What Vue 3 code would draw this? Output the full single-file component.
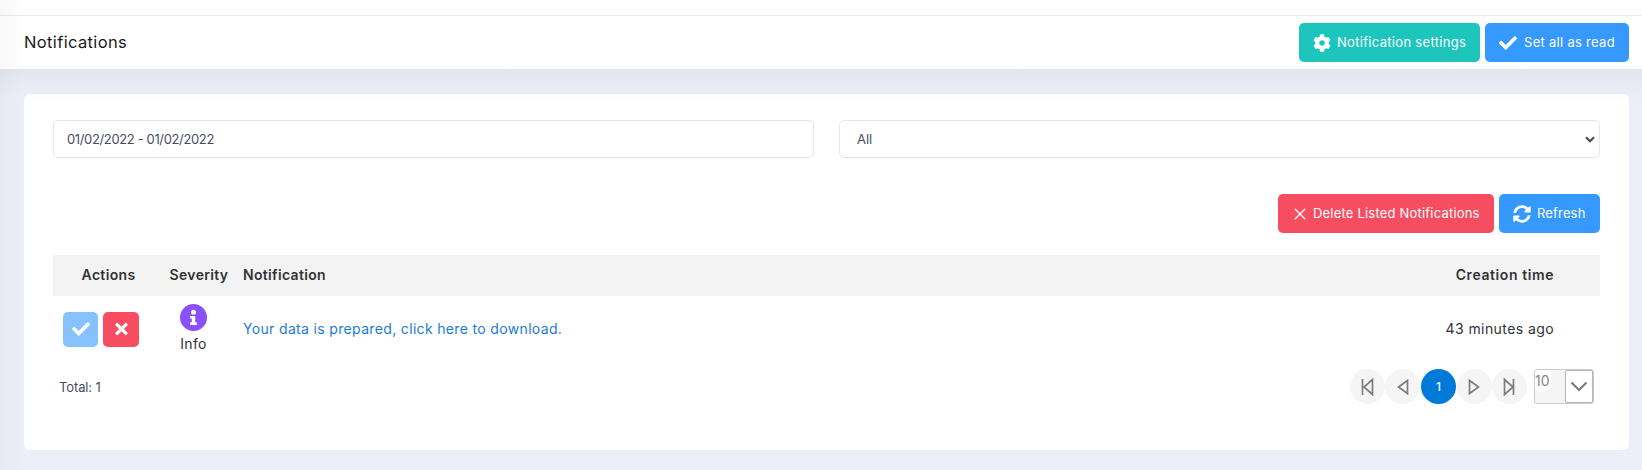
<script setup>
import { ref } from 'vue'
const range = ref('01/02/2022 - 01/02/2022')
const state = ref('All')
const check = 'M173.9 439.4 7.5 273c-10-10-10-26.200 0-36.200l36.200-36.200c10-10 26.200-10 36.200 0L192 312.700 432.100 72.600c10-10 26.200-10 36.200 0l36.200 36.200c10 10 10 26.200 0 36.200L210.100 439.400c-10 10-26.200 10-36.200 0z'
const gear = 'M487.400 315.700l-42.600-24.600c4.300-23.200 4.300-47 0-70.200l42.600-24.600c4.900-2.800 7.100-8.600 5.500-14-11.100-35.600-30-67.800-54.700-94.600-3.800-4.100-10-5.100-14.800-2.300L380.800 110c-17.900-15.400-38.500-27.300-60.800-35.100V25.800c0-5.600-3.900-10.500-9.400-11.700-36.700-8.200-74.300-7.800-109.200 0-5.500 1.200-9.400 6.100-9.400 11.700V75c-22.200 7.900-42.800 19.800-60.800 35.100L88.700 85.500c-4.900-2.800-11-1.900-14.800 2.300-24.700 26.700-43.600 58.900-54.700 94.600-1.700 5.400.6 11.200 5.500 14L67.300 221c-4.300 23.200-4.300 47 0 70.200l-42.600 24.600c-4.900 2.800-7.100 8.600-5.500 14 11.100 35.600 30 67.800 54.700 94.600 3.800 4.100 10 5.100 14.800 2.300l42.600-24.600c17.900 15.400 38.500 27.300 60.800 35.100v49.200c0 5.600 3.900 10.500 9.400 11.700 36.700 8.200 74.300 7.800 109.200 0 5.500-1.200 9.400-6.100 9.400-11.700v-49.200c22.200-7.900 42.800-19.800 60.800-35.100l42.600 24.600c4.900 2.800 11 1.900 14.800-2.300 24.700-26.700 43.600-58.900 54.700-94.600 1.500-5.500-.7-11.300-5.600-14.100zM256 336c-44.100 0-80-35.900-80-80s35.900-80 80-80 80 35.900 80 80-35.900 80-80 80z'
const pages = [
  { name: 'First', d: 'M12.500 10v16M22.500 10.500v15L14 18z' },
  { name: 'Previous', d: 'M22.500 11.500v13L13.500 18z' },
  { name: '1' },
  { name: 'Next', d: 'M12.500 11.500v13L21.500 18z' },
  { name: 'Last', d: 'M21.500 10v16M12.500 10.500v15L21 18z' },
]
</script>

<template>
  <div class="page">
    <div class="topbar"></div>
    <header class="subheader">
      <h1><span class="t-title">Notifications</span></h1>
      <div class="actions">
        <button class="btn teal settings">
          <svg viewBox="0 0 512 512" width="18" height="18"><path :d="gear" /></svg>
          <span class="t-settings">Notification settings</span>
        </button>
        <button class="btn blue read">
          <svg viewBox="0 0 512 512" width="18" height="18"><path :d="check" /></svg>
          <span class="t-read">Set all as read</span>
        </button>
      </div>
    </header>
    <main>
      <section class="card">
        <div class="filters">
          <div class="control"><span class="t-date">{{ range }}</span></div>
          <div class="control select"><span class="t-all">{{ state }}</span>
            <svg width="10" height="7" viewBox="0 0 10 7"><path d="M1 1.200l4 4 4-4" /></svg>
          </div>
        </div>
        <div class="actions tools">
          <button class="btn red delete">
            <svg class="line" viewBox="0 0 12 12" width="12" height="12"><path d="M.8.800l10.400 10.400M11.200.8.800 11.200" /></svg>
            <span class="t-delete">Delete Listed Notifications</span>
          </button>
          <button class="btn blue refresh">
            <svg viewBox="0 0 512 512" width="18" height="18"><path d="M370.700 133.300C339.500 104 298.900 88 255.800 88c-77.500.1-144.300 53.200-162.800 126.900-1.300 5.400-6.100 9.100-11.700 9.100H24.100c-7.500 0-13.200-6.800-11.800-14.200C33.900 94.900 134.800 8 256 8c66.400 0 126.800 26.100 171.300 68.700L463 41c15.100-15.100 41-4.400 41 17v134c0 13.300-10.700 24-24 24H346c-21.400 0-32.100-25.900-17-41zM32 296h134c21.400 0 32.100 25.900 17 41l-41.700 41.700c31.200 29.300 71.800 45.300 114.900 45.300 77.400-.1 144.300-53.100 162.800-126.800 1.300-5.400 6.100-9.200 11.700-9.200h57.300c7.500 0 13.200 6.800 11.800 14.200C478.100 417.100 377.200 504 256 504c-66.400 0-126.800-26.100-171.300-68.700L49 471c-15.100 15.100-41 4.400-41-17V320c0-13.300 10.700-24 24-24z" /></svg>
            <span class="t-refresh">Refresh</span>
          </button>
        </div>
        <div class="row head">
          <div class="c"><span class="t-head">Actions</span></div>
          <div class="c level"><span class="t-head">Severity</span></div>
          <div><span class="t-head">Notification</span></div>
          <div class="r"><span class="t-creation">Creation time</span></div>
        </div>
        <div class="row body">
          <div class="icons">
            <button class="sq light"><svg viewBox="0 0 512 512" width="18" height="18"><path :d="check" /></svg></button>
            <button class="sq red"><svg viewBox="0 0 352 512" width="13" height="18"><path d="M242.700 256l100.100-100.100c12.300-12.300 12.300-32.200 0-44.500l-22.200-22.200c-12.300-12.300-32.200-12.300-44.500 0L176 189.300 75.900 89.200c-12.300-12.300-32.200-12.300-44.500 0L9.200 111.500c-12.300 12.300-12.300 32.200 0 44.500L109.300 256 9.200 356.100c-12.300 12.300-12.300 32.200 0 44.500l22.200 22.200c12.300 12.300 32.200 12.300 44.500 0L176 322.700l100.100 100.100c12.300 12.300 32.200 12.300 44.500 0l22.200-22.200c12.300-12.300 12.300-32.200 0-44.500z" /></svg></button>
          </div>
          <div class="severity">
            <svg width="27" height="27" viewBox="0 0 27 27"><circle cx="13.500" cy="13.500" r="13.500" fill="#8950fc" /><circle cx="13.500" cy="8.300" r="2.500" fill="#fff" /><path d="M10.200 12h5v6.300h1.600V21h-6.600v-2.700h1.600v-3.700h-1.600z" fill="#fff" /></svg>
            <span class="t-info">Info</span>
          </div>
          <div><a class="t-link">Your data is prepared, click here to download.</a></div>
          <div class="r"><span class="t-ago">43 minutes ago</span></div>
        </div>
        <div class="footer">
          <span class="t-total">Total: 1</span>
          <div class="pager">
            <button v-for="p in pages" :key="p.name" :class="{ active: !p.d }">
              <svg v-if="p.d" width="35" height="35" viewBox="0 0 35 35"><path :d="p.d" /></svg>
              <span v-else>1</span>
            </button>
            <div class="size"><span>10</span><i><svg width="18" height="12" viewBox="0 0 18 12"><path d="M1.500 1.500 9 9l7.500-7.500" /></svg></i></div>
          </div>
        </div>
      </section>
      <div class="fade"></div>
    </main>
    <div class="side"></div>
  </div>
</template>

<style>
body { overflow: hidden; }
</style>
<style scoped>
* { box-sizing: border-box; }
.page { position: relative; height: 470px; overflow: hidden; background: #eceff7; font-family: Inter, Lato, sans-serif; font-size: 13px; color: #303238; }
span, a { display: inline-block; white-space: nowrap; }
.topbar { height: 16px; background: #fff; border-bottom: 1px solid #ebebec; }
.subheader { height: 53px; background: #fff; padding: 0 13px 0 24px; display: flex; justify-content: space-between; align-items: center; }
h1 { margin: 0 0 2px; font-size: 16.500px; font-weight: 400; color: #1b1b1d; line-height: 20px; }
.t-title { letter-spacing: .36px; }
.t-settings { letter-spacing: .31px; }
.t-read { letter-spacing: .29px; }
.t-date { letter-spacing: -.36px; }
.t-delete { letter-spacing: .2px; }
.t-refresh { letter-spacing: .16px; }
.t-head { letter-spacing: .33px; }
.t-creation { letter-spacing: .58px; }
.t-link { letter-spacing: .34px; }
.t-ago { letter-spacing: .42px; }
.t-info { letter-spacing: .3px; }
.t-total { letter-spacing: -.12px; }
.actions { display: flex; gap: 5px; }
.btn { height: 39px; border: 0; border-radius: 5px; padding: 0 0 0 14px; display: flex; align-items: center; font: 400 13px/18px Inter, sans-serif; color: #fff; }
.btn svg { flex: none; fill: #fff; }
.btn span { margin: 0 0 1px 7px; }
.teal { background: #1dc5bd; }
.blue { background: #3699ff; }
.red { background: #f64e60; }
.settings { width: 181px; }
.settings span { margin-left: 6px; }
.read { width: 144px; }
.delete { width: 216px; padding-left: 16px; }
.refresh { width: 101px; padding-left: 14px; }
.btn.refresh span { margin-left: 6px; }
.line path { stroke: #fff; stroke-width: 1.300; }
main { position: relative; padding: 25px 13px 0 24px; height: 401px; }
.fade { position: absolute; inset: 0 0 auto; height: 36px; background: linear-gradient(rgba(82,63,105,.055), rgba(82,63,105,.009) 25px, transparent); pointer-events: none; }
.side { position: absolute; left: 0; top: 0; bottom: 0; width: 24px; background: linear-gradient(90deg, rgba(82,63,105,.035), transparent); }
.card { height: 356px; background: #fff; border-radius: 6px; padding: 26px 29px 0; }
.filters { display: grid; grid-template-columns: 761px 761px; gap: 25px; }
.control { height: 38px; border: 1px solid #e4e6ef; border-radius: 5px; padding: 0 13px; display: flex; align-items: center; color: #464e5f; }
.select { padding: 0 4px 0 17px; justify-content: space-between; }
.select path { fill: none; stroke: #464e5f; stroke-width: 2.200; }
.tools { justify-content: flex-end; margin-top: 36px; }
.row { display: grid; grid-template-columns: 111px 79px 1fr 157px; align-items: center; font-size: 14px; line-height: 20px; }
.head { height: 41px; margin-top: 22px; padding-bottom: 1px; background: #f3f3f3; font-weight: 600; color: #333; }
.body { height: 65px; }
.c { text-align: center; }
.level { padding-right: 9px; }
.r { text-align: right; padding-right: 46px; }
.icons { display: flex; gap: 5px; padding: 1px 0 0 10px; }
.sq { flex: none; width: 35px; height: 35px; border: 0; border-radius: 5px; padding: 0; display: flex; align-items: center; justify-content: center; }
.sq.red { width: 36px; }
.sq svg { fill: #fff; margin-bottom: 1px; }
.light { background: #86c2ff; }
.severity { display: flex; flex-direction: column; align-items: center; padding: 1px 20px 0 0; }
.severity span { margin-top: 3px; }
a { color: #1c7cd6; }
.footer { display: flex; justify-content: space-between; align-items: center; height: 51px; padding: 0 6px; color: #464e5f; }
.pager { display: flex; align-items: center; }
.pager button { width: 35px; height: 35px; margin-right: .700px; padding: 0; border: 0; border-radius: 50%; background: #f5f5f5; display: flex; align-items: center; justify-content: center; color: #fff; font: 500 12px Inter, sans-serif; }
.pager button.active { background: #007ad9; }
.pager path { fill: none; stroke: #7c7c7c; stroke-width: 1.700; }
.size { width: 60px; height: 35px; margin-left: 6px; border: 1px solid #ccc; border-radius: 3px; background: #f5f5f5; display: flex; justify-content: space-between; color: #888; }
.size span { width: 16px; height: 21px; background: #fff; font-size: 14px; line-height: 22px; border-radius: 3px; }
.size i { width: 28px; border: 1px solid #b5b5b5; border-radius: 2px; background: #fff; display: flex; align-items: center; justify-content: center; }
.size path { stroke-width: 2.200; }
</style>
